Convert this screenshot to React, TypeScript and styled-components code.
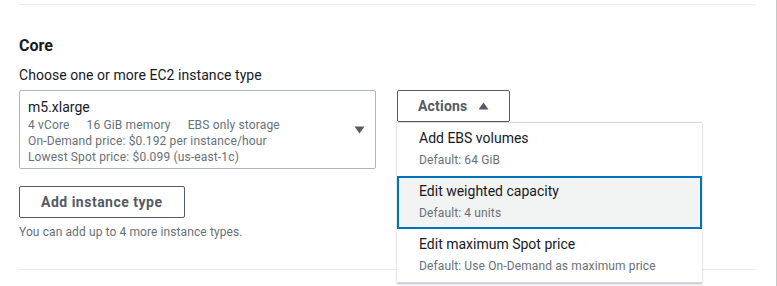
import styled, { createGlobalStyle } from "styled-components";

const GlobalStyle = createGlobalStyle`
  body {
    margin: 0;
    background: #ffffff;
    font-family: Roboto, "Liberation Sans", sans-serif;
    color: #16191f;
  }
`;

type MenuItemData = {
  title: string;
  hint: string;
  active?: boolean;
};

const menuItems: MenuItemData[] = [
  { title: "Add EBS volumes", hint: "Default: 64 GiB" },
  { title: "Edit weighted capacity", hint: "Default: 4 units", active: true },
  { title: "Edit maximum Spot price", hint: "Default: Use On-Demand as maximum price" },
];

const Caret = ({ up }: { up?: boolean }) => (
  <svg width="11" height="8" viewBox="0 0 11 8" aria-hidden="true">
    {up ? (
      <path d="M5.5 0.5 L10.5 7.5 L0.5 7.5 Z" fill="#545b64" />
    ) : (
      <path d="M0.5 0.5 L10.5 0.5 L5.5 7.5 Z" fill="#545b64" />
    )}
  </svg>
);

const App: React.FunctionComponent = () => {
  return (
    <>
      <GlobalStyle />
      <Frame>
        <Divider />
        <Section>
          <Heading>Core</Heading>
          <Label>Choose one or more EC2 instance type</Label>
          <FieldRow>
            <Select>
              <SelectText>
                <SelectValue>m5.xlarge</SelectValue>
                <SelectTags>
                  <span>4 vCore</span>
                  <span>16 GiB memory</span>
                  <span>EBS only storage</span>
                </SelectTags>
                <SelectLine>On-Demand price: $0.192 per instance/hour</SelectLine>
                <SelectLine>Lowest Spot price: $0.099 (us-east-1c)</SelectLine>
              </SelectText>
              <CaretSlot>
                <Caret />
              </CaretSlot>
            </Select>
            <ActionsWrapper>
              <Button>
                Actions
                <Caret up />
              </Button>
              <Menu>
                {menuItems.map((item) => (
                  <MenuItem key={item.title} $active={item.active}>
                    <MenuTitle>{item.title}</MenuTitle>
                    <MenuHint>{item.hint}</MenuHint>
                  </MenuItem>
                ))}
              </Menu>
            </ActionsWrapper>
          </FieldRow>
          <AddButton>Add instance type</AddButton>
          <Hint>You can add up to 4 more instance types.</Hint>
        </Section>
        <Divider />
      </Frame>
    </>
  );
};

const Frame = styled.div`
  width: 777px;
  height: 286px;
  border-right: 1px solid #c4c8c8;
  padding-top: 4px;
  box-sizing: border-box;
  overflow: hidden;
`;

const Divider = styled.div`
  height: 1px;
  margin: 0 20px 0 19px;
  background: #eaeded;
`;

const Section = styled.div`
  display: flex;
  flex-direction: column;
  align-items: flex-start;
  padding: 30px 0 29px 19px;
`;

const Heading = styled.h2`
  margin: 0;
  font-size: 16px;
  line-height: 22px;
  font-weight: 700;
`;

const Label = styled.div`
  margin-top: 8px;
  font-size: 14px;
  line-height: 20px;
  letter-spacing: 0.05px;
`;

const FieldRow = styled.div`
  display: flex;
  align-items: flex-start;
  gap: 21px;
  margin-top: 5px;
`;

const Select = styled.div`
  display: flex;
  align-items: flex-start;
  justify-content: space-between;
  width: 357px;
  height: 79px;
  box-sizing: border-box;
  padding: 6px 10px 0 8px;
  border: 1px solid #aab7b8;
  border-radius: 2px;
`;

const SelectText = styled.div`
  display: flex;
  flex-direction: column;
`;

const SelectValue = styled.div`
  font-size: 14px;
  line-height: 20px;
`;

const SelectLine = styled.div`
  font-size: 12px;
  line-height: 16px;
  letter-spacing: 0.15px;
  color: #687078;
`;

const SelectTags = styled(SelectLine)`
  display: flex;
  gap: 17px;
`;

const CaretSlot = styled.div`
  display: flex;
  margin-top: 29px;
`;

const ActionsWrapper = styled.div`
  position: relative;
`;

const Button = styled.button`
  display: flex;
  align-items: center;
  gap: 11px;
  height: 32px;
  box-sizing: border-box;
  padding: 0 20px;
  background: #ffffff;
  border: 1px solid #545b64;
  border-radius: 2px;
  font-family: inherit;
  font-size: 14px;
  font-weight: 700;
  color: #545b64;
  letter-spacing: 0.2px;
`;

const Menu = styled.div`
  position: absolute;
  top: 32px;
  left: 0;
  width: 305px;
  box-sizing: border-box;
  background: #ffffff;
  border: 1px solid #d5dbdb;
  box-shadow: 0 1px 2px rgba(0, 28, 36, 0.3);
`;

const MenuItem = styled.div<{ $active?: boolean }>`
  display: flex;
  flex-direction: column;
  gap: 4px;
  padding: 3px 20px 6px;
  border: 2px solid ${(p) => (p.$active ? "#0073bb" : "transparent")};
  background: ${(p) => (p.$active ? "#f2f3f3" : "#ffffff")};
  margin: 0 -1px;
`;

const MenuTitle = styled.div`
  font-size: 14px;
  line-height: 20px;
  color: #16191f;
`;

const MenuHint = styled.div`
  font-size: 12px;
  line-height: 16px;
  letter-spacing: 0.12px;
  color: #687078;
`;

const AddButton = styled(Button)`
  margin-top: 17px;
  padding: 0 21px;
  letter-spacing: 0.5px;
`;

const Hint = styled.div`
  margin-top: 6px;
  font-size: 12px;
  line-height: 16px;
  letter-spacing: 0.1px;
  color: #687078;
`;

export default App;
